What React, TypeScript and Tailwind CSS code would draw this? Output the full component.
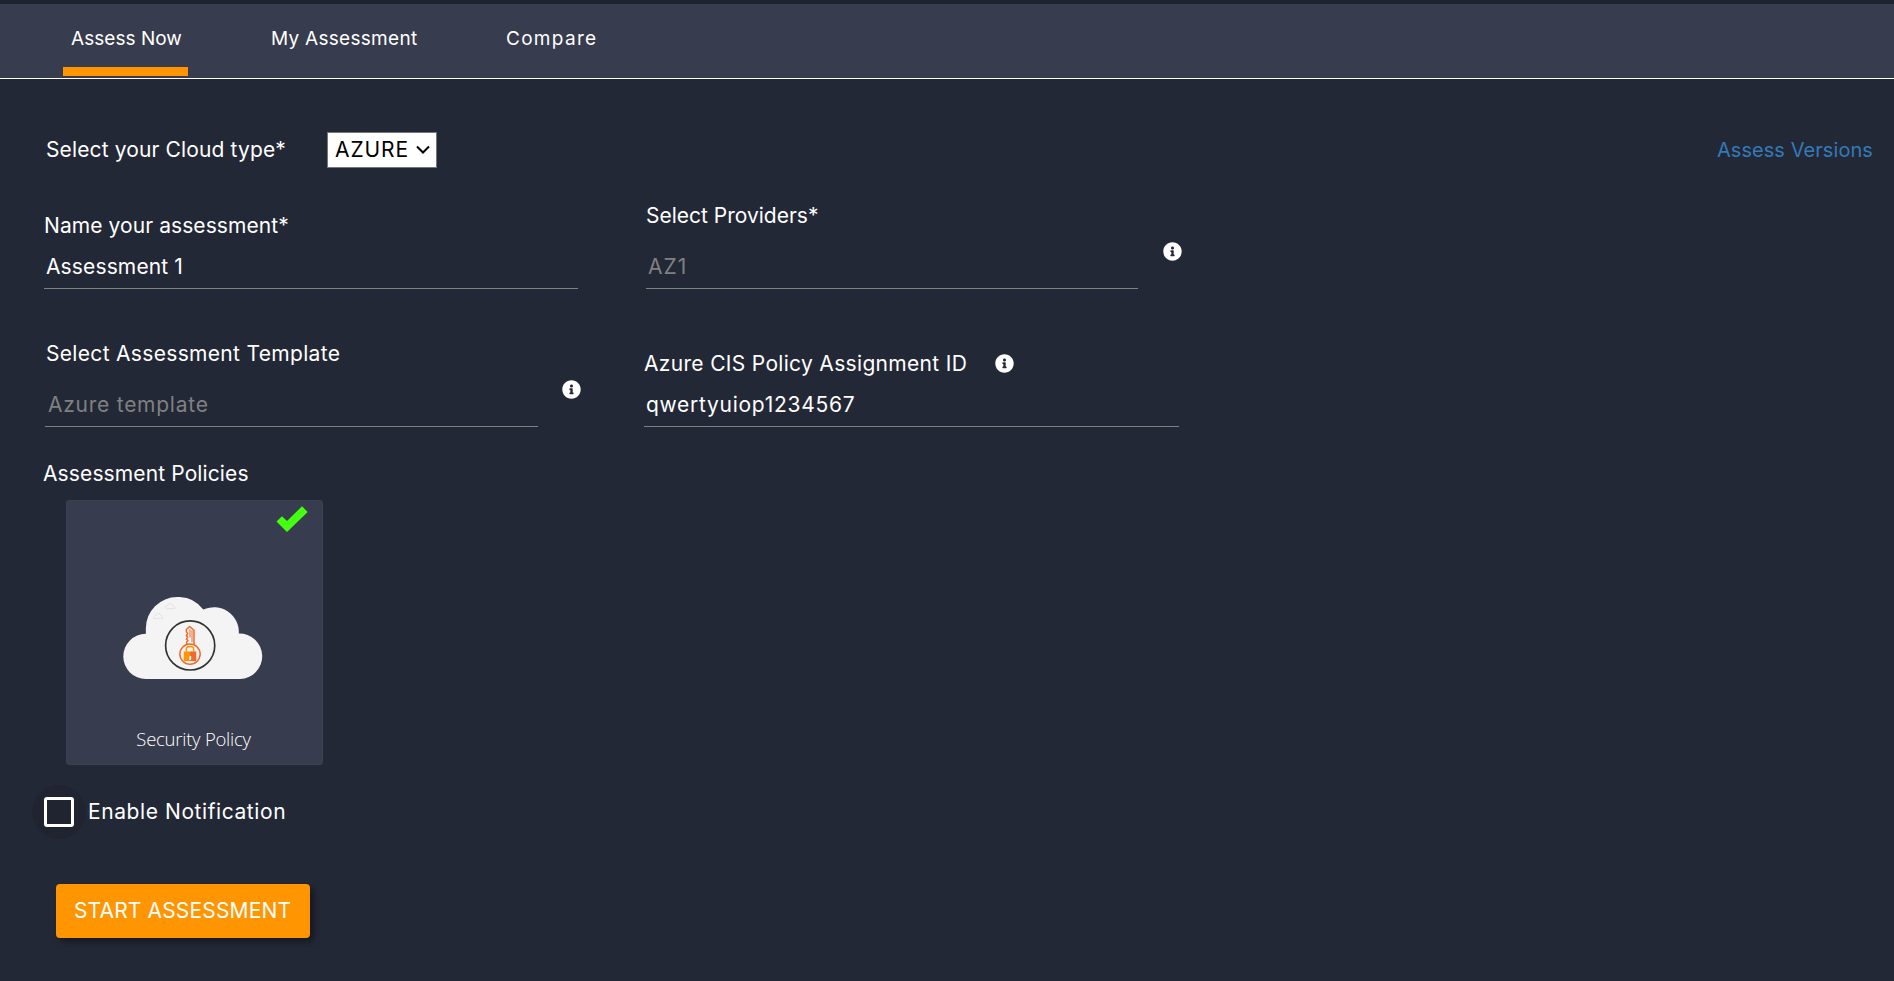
import type { ReactNode } from "react";
import { FaInfoCircle } from "react-icons/fa";

function Tab({ children, active = false, className }: { children: ReactNode; active?: boolean; className: string }) {
  return (
    <button
      className={`flex h-[72px] items-start border-b-[9px] pt-[23px] text-[19px] leading-6 whitespace-nowrap text-white ${
        active ? "border-[#ff9500]" : "border-transparent"
      } ${className}`}
    >
      {children}
    </button>
  );
}

function Info() {
  return <FaInfoCircle className="size-[19px] shrink-0 text-white" />;
}

function CloudKey() {
  return (
    <svg viewBox="39 50 420 247" className="h-[82px] w-[140px]" fill="none">
      <path
        fill="#f4f4f4"
        d="M107 297A68 68 0 0 1 107 161V144A94 94 0 0 1 201 50A94 94 0 0 1 280 88A75 75 0 0 1 387 160A68.500 68.500 0 0 1 391 297Z"
      />
      <g stroke="#dcdcdc" strokeWidth="2">
        <path d="M170 85Q165 84 167 78Q169 75 172 76Q174 69 180 70Q187 70 188 76Q195 77 194 85Z" />
        <path d="M134 115Q129 114 131 108Q133 105 136 106Q138 99 144 100Q151 100 152 106Q159 107 158 115Z" />
      </g>
      <circle cx="240.500" cy="196" r="74" stroke="#333" strokeWidth="5" />
      <g stroke="#f26a2b" strokeWidth="4.500" strokeLinejoin="round">
        <circle cx="240" cy="222" r="30.500" />
        <path d="M230 194V185L234 181L229 177L233 171L229 166L233 160L229 155V148L239 139L252 150V194" />
        <path d="M240 147V172M246 150V186" strokeWidth="3" />
      </g>
      <path d="M229 214V207Q229 199 240 199Q251 199 251 207V214" stroke="#ff9500" strokeWidth="4.500" />
      <path d="M221 214H240V243H221Z" fill="#ff9500" />
      <path d="M240 214H259V243H240Z" fill="#f26a2b" />
      <path d="M237 230Q241 224 244 230L243 240H238Z" fill="#f4f4f4" />
    </svg>
  );
}

export default function App() {
  return (
    <div className="h-[981px] w-full overflow-hidden bg-[#232837] font-['Inter',sans-serif] text-[21px] leading-6 text-white">
      <header className="h-[79px] border-t-4 border-b border-t-[#1d222e] border-b-white bg-[#373c4e]">
        <nav className="flex pl-[63px]">
          <Tab active className="w-[125px] pl-2 tracking-[0.040px]">Assess Now</Tab>
          <Tab className="ml-[83px] w-[160px] tracking-[0.280px]">My Assessment</Tab>
          <Tab className="ml-[75px] w-[110px] tracking-[1.300px]">Compare</Tab>
        </nav>
      </header>

      <main className="pt-[53px]">
        <div className="flex h-9 items-center justify-between pr-[21px] pl-[46px]">
          <div className="flex items-center">
            <label className="w-[281px] tracking-[0.130px]">Select your Cloud type*</label>
            <div className="flex h-9 w-[110px] items-center border border-[#767676] bg-white pl-[7px] text-black">
              <span className="w-[80px] tracking-[0.900px]">AZURE</span>
              <svg viewBox="0 0 16 10" className="h-[10px] w-4" fill="none" stroke="#000" strokeWidth="2">
                <path d="M2 1.500L8 7.500L14 1.500" />
              </svg>
            </div>
          </div>
          <a className="text-xl leading-6 tracking-[0.070px] text-[#337ab7]">Assess Versions</a>
        </div>

        <div className="flex h-[121px] items-end">
          <div className="ml-[44px] w-[534px] border-b border-[#808080]">
            <label className="block tracking-[0.080px]">Name your assessment*</label>
            <div className="mt-[17px] pb-[9px] pl-[2px] tracking-[0.130px]">Assessment 1</div>
          </div>
          <div className="ml-[68px] flex items-start">
            <div className="w-[492px] border-b border-[#808080]">
              <label className="block">Select Providers*</label>
              <div className="mt-[27px] pb-[9px] pl-[2px] tracking-[1px] text-[#808080]">AZ1</div>
            </div>
            <div className="mt-[38px] ml-[25px]">
              <Info />
            </div>
          </div>
        </div>

        <div className="flex h-[138px] items-end">
          <div className="ml-[45px] flex w-[599px] items-start">
            <div className="w-[493px] border-b border-[#808080]">
              <label className="block pl-px tracking-[0.320px]">Select Assessment Template</label>
              <div className="mt-[27px] pb-[9px] pl-[3px] tracking-[0.750px] text-[#808080]">Azure template</div>
            </div>
            <div className="mt-[38px] ml-6">
              <Info />
            </div>
          </div>
          <div className="w-[535px] border-b border-[#808080]">
            <div className="flex items-start">
              <label className="w-[351px] tracking-[0.320px]">Azure CIS Policy Assignment ID</label>
              <div className="mt-[2px]">
                <Info />
              </div>
            </div>
            <div className="mt-[17px] pb-[9px] pl-[2px] tracking-[0.720px]">qwertyuiop1234567</div>
          </div>
        </div>

        <h2 className="mt-[35px] pl-[43px] tracking-[0.120px]">Assessment Policies</h2>

        <div className="mt-[14px] ml-[66px] flex h-[265px] w-[257px] flex-col items-center rounded-[3px] border border-[#3c4152] bg-[#373c4e]">
          <svg viewBox="0 0 32 26" className="mt-[5px] mr-[14px] h-[26px] w-8 self-end" fill="#44ff11">
            <path d="M.5 15.500L6 10.200L11 15L26 .3L31.700 6L11 26Z" />
          </svg>
          <div className="mt-[65px] mr-[3px]">
            <CloudKey />
          </div>
          <span className="mt-[48px] mr-[2px] font-['Open_Sans',sans-serif] text-[18.500px] font-light tracking-[-0.250px] text-white">
            Security Policy
          </span>
        </div>

        <div className="mt-5 ml-8 flex h-[54px] items-center">
          <div className="flex size-[54px] items-center justify-center rounded-full bg-[#1f2430]">
            <div className="size-[30px] rounded-[3px] border-[3px] border-white" />
          </div>
          <label className="ml-[2px] tracking-[0.580px]">Enable Notification</label>
        </div>

        <button className="mt-[45px] ml-[56px] flex h-[54px] w-[254px] items-center rounded bg-[#ff9500] pl-[18px] tracking-[0.150px] whitespace-nowrap shadow-[4px_4px_6px_rgba(0,0,0,0.4)]">
          START ASSESSMENT
        </button>
      </main>
    </div>
  );
}
